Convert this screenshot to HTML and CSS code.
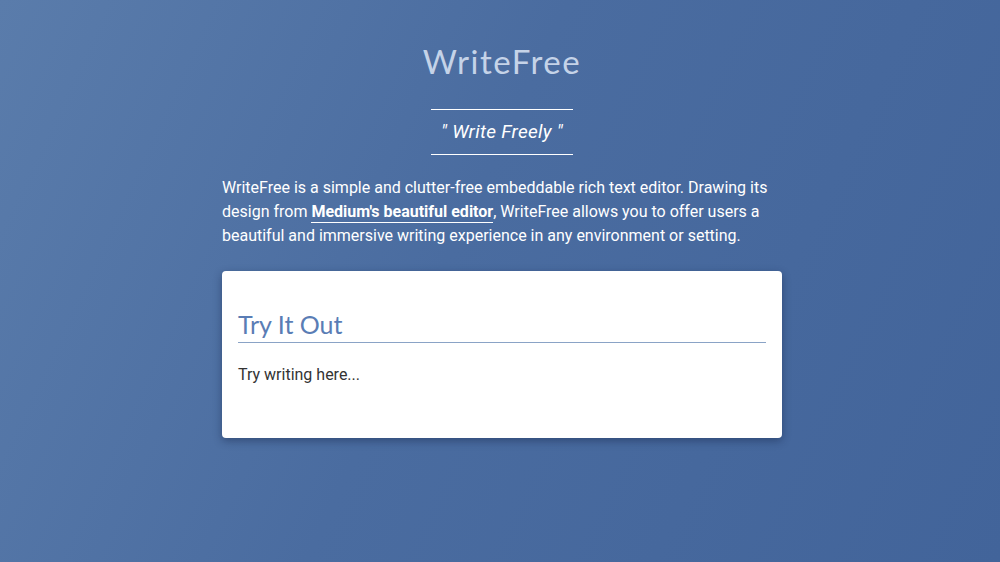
FILE: index.html
```html
<!DOCTYPE html>
<html>
<head>
<meta charset="utf-8">
<link rel="stylesheet" href="styles.css">
</head>
<body>
<main class="page">
  <h1 class="title">WriteFree</h1>
  <div class="tagline-wrap"><p class="tagline">" Write Freely "</p></div>
  <p class="intro">WriteFree is a simple and clutter-free embeddable rich text editor. Drawing its design from <a class="link" href="#">Medium's beautiful editor</a>, WriteFree allows you to offer users a beautiful and immersive writing experience in any environment or setting.</p>
  <section class="card">
    <h2 class="card-title">Try It Out</h2>
    <div class="editor">Try writing here...</div>
  </section>
</main>
</body>
</html>
```
FILE: styles.css
```css
html, body {
  margin: 0;
  height: 100%;
}
body {
  background: linear-gradient(115deg, #5a7cab 0%, #4a6ca0 45%, #42649a 100%);
  font-family: Roboto, "Liberation Sans", sans-serif;
  color: #ffffff;
  overflow: hidden;
}
.page {
  width: 560px;
  margin: 0 auto;
  padding: 42px 0 0 4px;
  display: flex;
  flex-direction: column;
  align-items: stretch;
}
.title {
  margin: 0;
  text-align: center;
  font-family: Lato, "DejaVu Sans", sans-serif;
  font-weight: 400;
  font-size: 33px;
  line-height: 38px;
  letter-spacing: 1.5px;
  color: #c5d3e8;
}
.tagline-wrap {
  display: flex;
  justify-content: center;
  margin-top: 29px;
}
.tagline {
  margin: 0;
  width: 142px;
  border-top: 1px solid #ffffff;
  border-bottom: 1px solid #ffffff;
  text-align: center;
  font-style: italic;
  font-size: 19px;
  line-height: 44px;
  letter-spacing: 0.3px;
  box-sizing: border-box;
}
.intro {
  margin: 21px 0 0 0;
  font-size: 16px;
  line-height: 24px;
  color: #ffffff;
}
.link {
  color: #ffffff;
  font-weight: 700;
  text-decoration: none;
  border-bottom: 1px solid #ffffff;
  padding-bottom: 1px;
}
.card {
  margin-top: 23px;
  background: #ffffff;
  border-radius: 4px;
  box-shadow: 0 3px 8px rgba(20, 35, 70, 0.45);
  padding: 35px 16px 47px 16px;
  height: 167px;
  box-sizing: border-box;
}
.card-title {
  margin: 0;
  font-family: Lato, "DejaVu Sans", sans-serif;
  font-weight: 400;
  font-size: 25px;
  line-height: 36px;
  color: #5a7db5;
  border-bottom: 1px solid #8aa3c6;
}
.editor {
  margin-top: 20px;
  font-size: 16px;
  line-height: 24px;
  color: #333333;
}
```
